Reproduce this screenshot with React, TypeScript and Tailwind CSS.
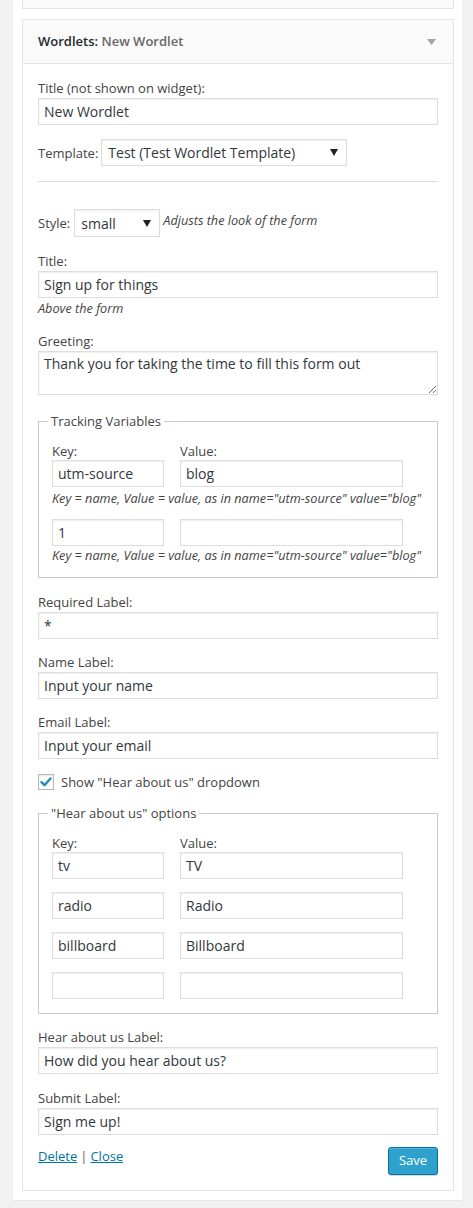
import React from "react";

const font = { fontFamily: '"Open Sans", "Liberation Sans", sans-serif' };

function TextInput({ value, className = "" }: { value: string; className?: string }) {
  return (
    <div
      className={`h-[27px] border border-[#ddd] bg-white px-[5px] flex items-center text-[14px] text-[#32373c] shadow-[inset_0_1px_2px_rgba(0,0,0,0.07)] ${className}`}
    >
      <span className="whitespace-nowrap">{value}</span>
    </div>
  );
}

function Label({ children, className = "" }: { children: React.ReactNode; className?: string }) {
  return <div className={`text-[13px] leading-[20px] text-[#444] ${className}`}>{children}</div>;
}

function Select({ value, className = "" }: { value: string; className?: string }) {
  return (
    <div
      className={`border border-[#ddd] bg-white flex items-center justify-between pl-[6px] pr-[8px] text-[14px] text-[#32373c] shadow-[inset_0_1px_2px_rgba(0,0,0,0.07)] ${className}`}
    >
      <span className="whitespace-nowrap">{value}</span>
      <svg width="8" height="7" viewBox="0 0 8 7">
        <path d="M0 0 L8 0 L4 7 Z" fill="#222" />
      </svg>
    </div>
  );
}

function Hint({ children, className = "" }: { children: React.ReactNode; className?: string }) {
  return <div className={`text-[12.7px] italic text-[#444] ${className}`}>{children}</div>;
}

function KVRow({ k, v, className = "" }: { k: string; v: string; className?: string }) {
  return (
    <div className={`flex gap-[16px] ${className}`}>
      <TextInput value={k} className="w-[112px]" />
      <TextInput value={v} className="w-[223px]" />
    </div>
  );
}

export default function App() {
  return (
    <div className="bg-[#f1f1f1] min-h-[1208px] w-[473px]" style={font}>
      <div className="ml-[13px] w-[449px] bg-white pl-[9px] pr-[8px] pb-[9px] shadow-[0_1px_1px_rgba(0,0,0,0.04)]">
        {/* previous widget bottom */}
        <div className="h-[9px] border-x border-b border-[#e5e5e5] bg-[#fafafa]" />

        {/* widget */}
        <div className="mt-[10px] border border-[#e5e5e5] bg-white">
          <div className="h-[44px] bg-[#fafafa] border-b border-[#e5e5e5] flex items-center justify-between pl-[15px] pr-[17px]">
            <div className="text-[13px] font-semibold text-[#23282d]">
              Wordlets: <span className="text-[#686868]">New Wordlet</span>
            </div>
            <svg width="9" height="6" viewBox="0 0 9 6">
              <path d="M0 0 L9 0 L4.5 6 Z" fill="#a0a5aa" />
            </svg>
          </div>

          <div className="px-[15px] pb-[15px]">
            <Label className="mt-[14px]">Title (not shown on widget):</Label>
            <TextInput value="New Wordlet" />

            <div className="mt-[14px] flex items-center gap-[3px]">
              <Label>Template:</Label>
              <Select value="Test (Test Wordlet Template)" className="w-[246px] h-[27px]" />
            </div>

            <div className="mt-[15px] border-t border-[#ddd]" />

            <div className="mt-[27px] flex items-center">
              <Label>Style:</Label>
              <Select value="small" className="ml-[4px] w-[86px] h-[28px]" />
              <Hint className="ml-[3px] -mt-[5px]">Adjusts the look of the form</Hint>
            </div>

            <Label className="mt-[14px]">Title:</Label>
            <TextInput value="Sign up for things" />
            <Hint className="leading-[20px]">Above the form</Hint>

            <Label className="mt-[13px]">Greeting:</Label>
            <textarea
              className="block w-full h-[44px] border border-[#ddd] bg-white px-[5px] py-[2px] text-[14px] leading-[20px] text-[#32373c] shadow-[inset_0_1px_2px_rgba(0,0,0,0.07)] outline-none"
              defaultValue="Thank you for taking the time to fill this form out"
              readOnly
              style={font}
            />

            <fieldset className="mt-[16px] border border-[#ccc] px-[13px] pb-[13px]">
              <legend className="px-[3px] -ml-[4px] text-[13px] leading-[20px] text-[#444]">Tracking Variables</legend>
              <div className="mt-[11px] flex gap-[16px]">
                <div className="w-[112px] text-[13px] leading-[18px] text-[#444]">Key:</div>
                <div className="text-[13px] leading-[18px] text-[#444]">Value:</div>
              </div>
              <KVRow k="utm-source" v="blog" />
              <Hint className="mt-[2px] leading-[18px] whitespace-nowrap">
                Key = name, Value = value, as in name="utm-source" value="blog"
              </Hint>
              <KVRow k="1" v="" className="mt-[12px]" />
              <Hint className="leading-[18px] whitespace-nowrap">
                Key = name, Value = value, as in name="utm-source" value="blog"
              </Hint>
            </fieldset>

            <Label className="mt-[14px]">Required Label:</Label>
            <TextInput value="*" />

            <Label className="mt-[13px]">Name Label:</Label>
            <TextInput value="Input your name" />

            <Label className="mt-[13px]">Email Label:</Label>
            <TextInput value="Input your email" />

            <div className="mt-[13px] flex items-center gap-[7px]">
              <div className="w-[16px] h-[16px] border border-[#b4b9be] bg-white flex items-center justify-center shadow-[inset_0_1px_2px_rgba(0,0,0,0.1)]">
                <svg width="12" height="10" viewBox="0 0 12 10">
                  <path d="M1.5 5.2 L4.5 8.2 L10.5 1.5" fill="none" stroke="#1e8cbe" strokeWidth="2.4" strokeLinecap="round" strokeLinejoin="round" />
                </svg>
              </div>
              <Label>Show "Hear about us" dropdown</Label>
            </div>

            <fieldset className="mt-[11px] border border-[#ccc] px-[13px] pb-[14px]">
              <legend className="px-[3px] -ml-[4px] text-[13px] leading-[20px] text-[#444]">"Hear about us" options</legend>
              <div className="mt-[11px] flex gap-[16px]">
                <div className="w-[112px] text-[13px] leading-[18px] text-[#444]">Key:</div>
                <div className="text-[13px] leading-[18px] text-[#444]">Value:</div>
              </div>
              <KVRow k="tv" v="TV" />
              <KVRow k="radio" v="Radio" className="mt-[13px]" />
              <KVRow k="billboard" v="Billboard" className="mt-[13px]" />
              <KVRow k="" v="" className="mt-[13px]" />
            </fieldset>

            <Label className="mt-[13px]">Hear about us Label:</Label>
            <TextInput value="How did you hear about us?" />

            <Label className="mt-[14px]">Submit Label:</Label>
            <TextInput value="Sign me up!" />

            <div className="mt-[12px] flex items-start justify-between">
              <div className="text-[13px] leading-[18px] text-[#444]">
                <a href="#" className="text-[#0074a2] underline">Delete</a>
                <span className="mx-[3px] text-[#666]">|</span>
                <a href="#" className="text-[#0074a2] underline">Close</a>
              </div>
              <button className="h-[28px] w-[50px] rounded-[3px] border border-[#0074a2] bg-[#2ea2cc] text-[13px] text-white shadow-[inset_0_1px_0_rgba(120,200,230,0.5),0_1px_0_rgba(0,0,0,0.15)]">
                Save
              </button>
            </div>
          </div>
        </div>
      </div>
    </div>
  );
}
